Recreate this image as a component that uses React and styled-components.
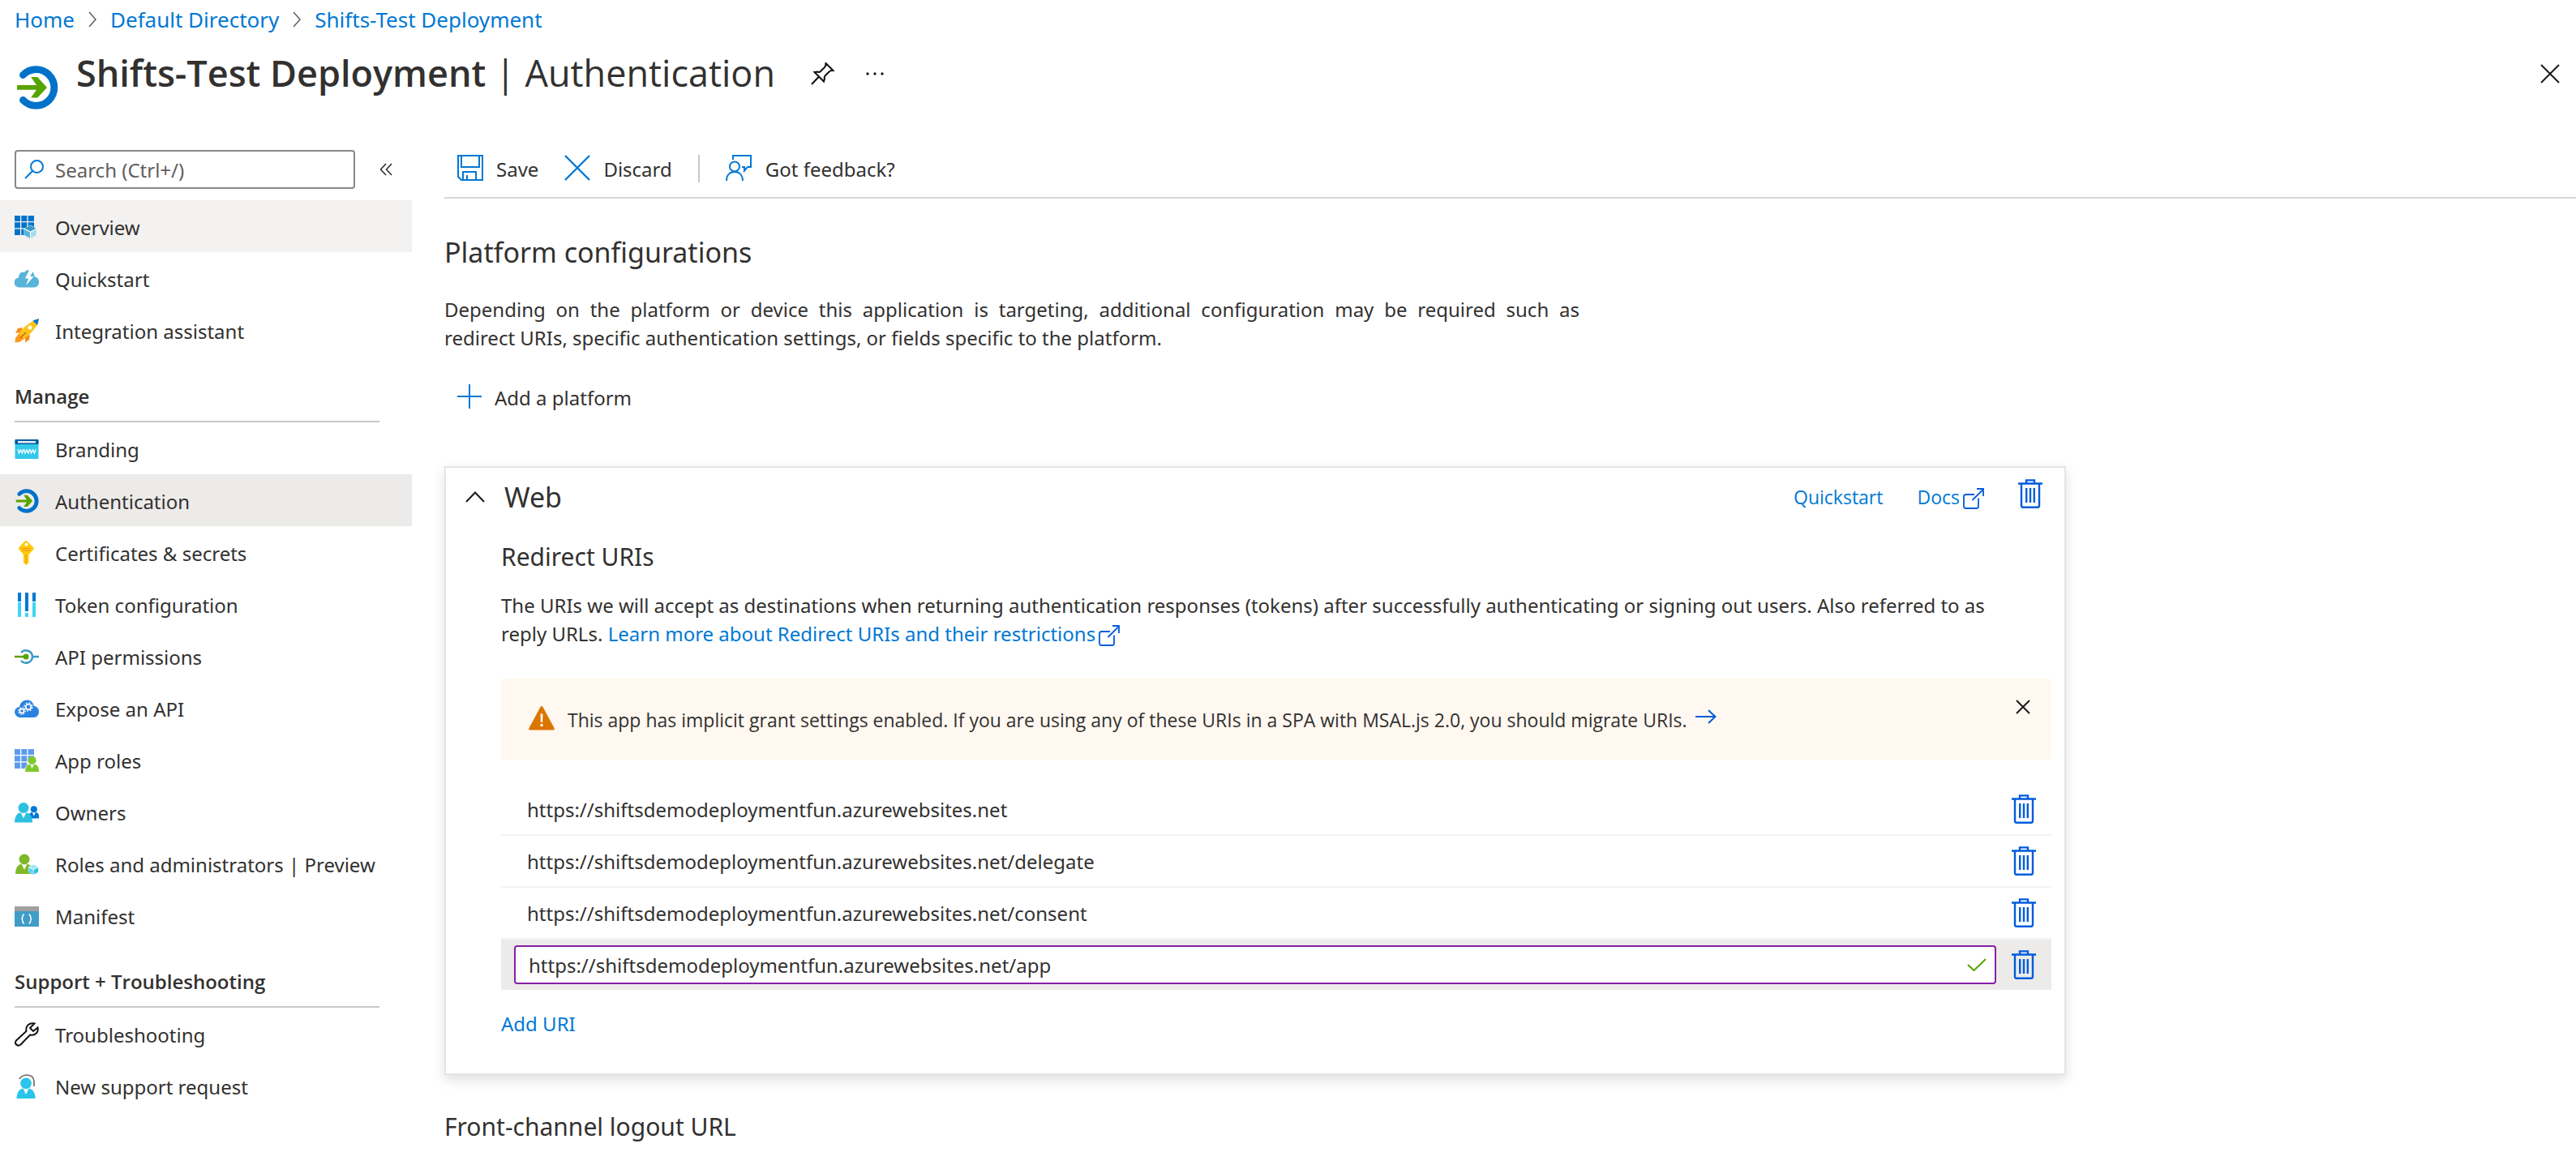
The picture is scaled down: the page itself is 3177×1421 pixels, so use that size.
import React from "react";
import styled, { createGlobalStyle, css } from "styled-components";

const Global = createGlobalStyle`
  *, *::before, *::after { box-sizing: border-box; }
  body {
    margin: 0;
    background: #ffffff;
    color: #323130;
    font-family: "Noto Sans", "Open Sans", sans-serif;
    font-size: 24px;
    line-height: 35px;
  }
  button, input { font: inherit; color: inherit; }
  h1, h2, h3, p, ul, ol { margin: 0; padding: 0; font-weight: 400; }
  ul, ol { list-style: none; }
  svg { display: block; flex: none; }
`;

const displayFont = css`
  font-family: "Open Sans", "Noto Sans", sans-serif;
`;

const smallText = css`
  ${displayFont}
  font-size: 23px;
`;

const Page = styled.div`
  display: flex;
  flex-direction: column;
`;

const Link = styled.a`
  color: #0078d4;
  text-decoration: none;
  ${(p) => p.$small && smallText}
  svg { display: inline-block; vertical-align: -6px; margin-left: 4px; }
`;

const NoBreak = styled.span`
  white-space: nowrap;
`;

const Crumbs = styled.ol`
  display: flex;
  align-items: center;
  height: 48px;
  padding: 0 18px;
  font-size: 26px;
  li { display: flex; align-items: center; }
  li svg { margin: 0 17px; }
`;

const TitleBar = styled.header`
  display: flex;
  align-items: center;
  height: 120px;
  padding: 0 20px 0 18px;
`;

const Title = styled.h1`
  ${displayFont}
  margin: 0 44px 36px 22px;
  font-size: 45px;
  line-height: 60px;
  strong { font-weight: 600; }
`;

const IconButton = styled.button`
  display: flex;
  align-items: center;
  justify-content: center;
  padding: 0;
  border: 0;
  background: none;
`;

const TitleActions = styled.div`
  display: flex;
  flex: 1;
  align-items: center;
  gap: 38px;
  margin-bottom: 34px;
  & > :last-child { margin-left: auto; }
`;

const Body = styled.div`
  display: flex;
  align-items: flex-start;
`;

const Sidebar = styled.nav`
  flex: none;
  width: 508px;
`;

const SearchRow = styled.div`
  display: flex;
  align-items: center;
  gap: 30px;
  padding: 17px 24px 14px 18px;
`;

const SearchBox = styled.label`
  display: flex;
  align-items: center;
  gap: 14px;
  width: 420px;
  height: 48px;
  padding: 0 10px;
  border: 2px solid #8a8886;
  border-radius: 4px;
  input {
    flex: 1;
    min-width: 0;
    padding: 0;
    border: 0;
    outline: 0;
    background: none;
  }
  input::placeholder { color: #605e5c; opacity: 1; }
`;

const NavLink = styled.a`
  display: flex;
  align-items: center;
  gap: 20px;
  height: 64px;
  padding: 2px 0 0 18px;
  color: inherit;
  text-decoration: none;
  background: ${(p) => p.$bg || "transparent"};
`;

const NavHeading = styled.h2`
  ${displayFont}
  height: 82px;
  margin: 0 40px 0 18px;
  padding-top: 32px;
  border-bottom: 2px solid #c8c8c8;
  font-size: 24px;
  font-weight: 600;
`;

const Main = styled.main`
  flex: 1;
  min-width: 0;
  margin-left: 40px;
`;

const Toolbar = styled.div`
  display: flex;
  align-items: center;
  gap: 32px;
  height: 77px;
  padding: 5px 0 0 16px;
  border-bottom: 2px solid #d6d6d6;
`;

const Command = styled.button`
  display: flex;
  align-items: center;
  gap: 16px;
  height: 48px;
  padding: 0;
  border: 0;
  background: none;
  svg { margin-bottom: 2px; }
`;

const Divider = styled.span`
  width: 2px;
  height: 34px;
  background: #c8c8c8;
`;

const Heading = styled.h2`
  font-size: ${(p) => (p.$large ? "34px" : "30px")};
  line-height: 48px;
`;

const Content = styled.div`
  display: flex;
  flex-direction: column;
  align-items: flex-start;
  padding-top: 42px;
`;

const Intro = styled.p`
  max-width: 1400px;
  margin: 29px 0 32px;
  text-align: justify;
`;

const AddPlatform = styled(Command)`
  margin-left: 16px;
`;

const Card = styled.section`
  width: 100%;
  max-width: 2000px;
  margin: 61px 0 40px;
  padding: 0 16px 44px 68px;
  border: 2px solid #e5e5e5;
  box-shadow: 0 6px 14px rgba(0, 0, 0, 0.13);
`;

const CardHeader = styled.div`
  display: flex;
  align-items: center;
  height: 72px;
  margin-left: -44px;
  padding-right: 11px;
  h2 { flex: 1; margin-left: 24px; }
`;

const CardLinks = styled.div`
  display: flex;
  align-items: center;
  gap: 42px;
  button { margin-bottom: 8px; }
`;

const SubHeading = styled(Heading)`
  margin-top: 14px;
`;

const Description = styled.p`
  margin: 18px 0 38px;
`;

const Banner = styled.div`
  display: flex;
  align-items: flex-start;
  height: 100px;
  padding: 34px 26px 0 34px;
  border-radius: 4px;
  background: #fff8f0;
  ${smallText}
  p { flex: 1; margin-left: 16px; }
  a svg { display: inline-block; vertical-align: 4px; margin-left: 10px; }
  button { margin-top: -8px; }
`;

const UriList = styled.ul`
  margin-top: 30px;
`;

const UriRow = styled.li`
  display: flex;
  align-items: center;
  justify-content: space-between;
  height: 64px;
  padding: 0 19px 0 32px;
  border-bottom: 2px solid #f3f2f1;
  ${(p) =>
    p.$active &&
    css`
      height: 62px;
      padding-left: 16px;
      gap: 19px;
      border-bottom: 0;
      background: #edebe9;
    `}
`;

const UriField = styled.label`
  display: flex;
  flex: 1;
  align-items: center;
  height: 48px;
  padding: 0 10px 0 16px;
  border: 2px solid #881fa8;
  border-radius: 4px;
  background: #ffffff;
  input {
    flex: 1;
    min-width: 0;
    padding: 0;
    border: 0;
    outline: 0;
    background: none;
  }
`;

const AddUri = styled.button`
  display: block;
  margin-top: 24px;
  padding: 0;
  border: 0;
  background: none;
  color: #0078d4;
`;

/* Icons */

const Line = ({ w, h = w, color = "#0078d4", sw = 2, children }) => (
  <svg width={w} height={h} viewBox={`0 0 ${w} ${h}`} fill="none" stroke={color} strokeWidth={sw} aria-hidden="true">
    {children}
  </svg>
);
const Fill = ({ size = 30, children }) => (
  <svg width={size} height={size} viewBox="0 0 30 30" aria-hidden="true">{children}</svg>
);

const AuthIcon = ({ size }) => (
  <Fill size={size}>
    <path d="M5.800 6.400A12.400 12.400 0 1 1 5.800 23.600" fill="none" stroke="#0072c9" strokeWidth="4.900" strokeLinecap="round" />
    <path d="M1.700 13.400H15L11.200 7.800h4.500L22.200 15l-6.500 6.900h-4.500L15 16.500H1.700z" fill="#57a300" />
  </Fill>
);
const TrashIcon = () => (
  <Line w={30} h={36} color="#015cda" sw={2.4}>
    <path d="M0 5.500h30M10 5V1.400h10V5M4 6v26.500q0 2.200 2 2.200h18q2 0 2-2.200V6M10.200 11v18M15 11v18M19.800 11v18" />
  </Line>
);
const ExternalIcon = () => (
  <Line w={26} color="#015cda" sw={1.8}>
    <path d="M14 8H3.500Q1 8 1 10.500v12Q1 25 3.500 25h13q2.500 0 2.500-2.500V12.500M11.500 15 25 1.500M17 1h8v9" />
  </Line>
);
const Cross = ({ s, color = "#1b1a19", sw = 2 }) => (
  <Line w={s} color={color} sw={sw}><path d={`M1 1 ${s - 1} ${s - 1}M${s - 1} 1 1 ${s - 1}`} /></Line>
);
const CrumbChevron = () => <Line w={10} h={20} color="#605e5c" sw={1.5}><path d="m1 1 8 9-8 9" /></Line>;
const PinIcon = () => (
  <Line w={29} h={28} color="#111">
    <path d="m18.500 1 9 9q-3.500-.5-5 1.500l-4.500 4.500q-2 2-1 4l-1 3.500L4.500 12l3.500-.5q2.500 1 4-.5l4.500-4.500q2-1.500 2-5.500zM10 17.500 1 27" />
  </Line>
);
const SaveIcon = () => (
  <Line w={32}>
    <path d="M1 1h30v30H5l-4-4zM5 1v14h22V1M7 31V21h16v10M12 31v-6" />
  </Line>
);
const FeedbackIcon = () => (
  <Line w={33} h={32}>
    <circle cx="11" cy="14.500" r="6" />
    <path d="M1 32c0-7 4-11 10-11s10 4 10 11M9 6V1h22v14h-4l-4 4.500V15h-3" />
  </Line>
);
const PlusIcon = () => <Line w={30}><path d="M15 0v30M0 15h30" /></Line>;
const SearchIcon = () => <Line w={24}><circle cx="15.500" cy="8.500" r="7.500" /><path d="M10 14 1 23" /></Line>;
const CollapseIcon = () => <Line w={16} color="#323130" sw={1.6}><path d="M8 1 1.500 8 8 15M15 1 8.500 8 15 15" /></Line>;
const ChevronUp = () => <Line w={24} h={14} color="#1b1a19"><path d="m1 13 11-11.500L23 13" /></Line>;
const CheckIcon = () => <Line w={24} h={16} color="#57a300"><path d="m1 8 7.500 7L23 1" /></Line>;
const ArrowIcon = () => <Line w={26} h={18} color="#015cda"><path d="M0 9h24M16 1l8.500 8L16 17" /></Line>;
const DotsIcon = () => (
  <svg width="24" height="6" viewBox="0 0 24 6" fill="#1b1a19" aria-hidden="true">
    <circle cx="3" cy="3" r="1.700" /><circle cx="12" cy="3" r="1.700" /><circle cx="21" cy="3" r="1.700" />
  </svg>
);
const WarnIcon = () => (
  <svg width="32" height="30" viewBox="0 0 32 30" aria-hidden="true">
    <path d="M14.500 1q1.500-2 3 0l14 26q1 2.500-1.500 2.500H2q-2.500 0-1.500-2.500z" fill="#db7500" />
    <path d="M14.500 9.500h3l-.4 10.500h-2.200zM14.500 22h3v3h-3z" fill="#fff" />
  </svg>
);

const Person = ({ color, x = 0, y = 0, s = 1 }) => (
  <g transform={`translate(${x} ${y}) scale(${s})`}>
    <path d="M0 25c0-7 3-11.500 7-12h8c4 .500 7 5 7 12z" fill={color} />
    <path d="m7.500 12.500 3.500 7.500 3.500-7.500z" fill="#fff" />
    <circle cx="11" cy="7" r="6.500" fill={color} />
  </g>
);
const Grid = ({ color, children }) => (
  <Fill>
    <path d="M0 1h7v7H0zM8.300 1h7v7h-7zM16.600 1h7.400v7h-7.400zM0 9.300h7v7H0zM8.300 9.300h7v7h-7zM16.600 9.300h7.400v7h-7.400zM0 17.600h7V25H0zM8.300 17.600h7V25h-7z" fill={color} />
    {children}
  </Fill>
);
const Cube = ({ x, y, s = 1, top = "#3999c6", left = "#59b4d9", right = "#a9dbf0" }) => (
  <g transform={`translate(${x} ${y}) scale(${s})`}>
    <path d="M8 0 0 4.500v8L8 17l8-4.500v-8z" fill="#fff" />
    <path d="m8 .5 7 3.800-7 3.700-7-3.700z" fill={top} />
    <path d="M.5 5.200 7.500 9v7.500l-7-4z" fill={left} />
    <path d="M15.500 5.200 8.500 9v7.500l7-4z" fill={right} />
  </g>
);

const icons = {
  overview: <Grid color="#0072c9"><Cube x={11.5} y={12.5} /></Grid>,
  quickstart: (
    <Fill>
      <path d="M6 25.500a6 6 0 0 1-1-12C5 8 9 5 12 7c3-5 12-4 12.500 5 7.500 1 7.500 13 0 13.500z" fill="#59b4d9" />
      <path d="m18 4-5 10.500h4L14 23l9.500-11h-4.500L24 4z" fill="#fff" />
    </Fill>
  ),
  rocket: (
    <Fill>
      <path d="M10 11 4 12l-3 6 7-1zM19 20l-1 6-5 3.500 0-8z" fill="#f78d1e" />
      <path d="M6 17 1 24l-.5 5.500L6 29l7-5z" fill="#ff9b1f" />
      <path d="M24 2 30 .5 28.500 7 21 17l-9 8-7-6.500 8-9z" fill="#fcc419" />
      <path d="M22.500 2.500 30 0l-2 8z" fill="#0072c9" />
      <circle cx="19" cy="11" r="2.500" fill="#fff" />
      <path d="m7 24 7-7" stroke="#d0600a" strokeWidth="1.500" />
    </Fill>
  ),
  branding: (
    <Fill>
      <rect x=".5" y="3" width="29" height="24" rx="1" fill="#32c8ea" />
      <path d="M.5 9V4q0-1 1-1h27q1 0 1 1v5z" fill="#005ba1" />
      <rect x="4" y="5" width="22" height="2.500" fill="#e6eef5" />
      <path d="m4 15 1.500 5 2-4 2 4 1.500-5M11.500 15l1.500 5 2-4 2 4 1.500-5M19 15l1.500 5 2-4 2 4 1.500-5" fill="none" stroke="#fff" strokeWidth="1.300" />
    </Fill>
  ),
  auth: <AuthIcon size={30} />,
  key: (
    <Fill>
      <path d="M14 0q1 0 2 1l7 7q1.500 1.500 0 3l-5.500 6v10L14.500 30 11 27V17L5.500 11Q4 9.500 5.500 8l6.500-7q1-1 2-1z" fill="#ffca0a" />
      <path d="M9 9.500h10M9 12h10M14 17v11" stroke="#f78d1e" strokeWidth="1" />
      <circle cx="14.500" cy="4.500" r="2" fill="#fff" />
    </Fill>
  ),
  token: (
    <Fill>
      <path d="M4 0h4v11H4zM13 0h4v23h-4zM22 0h4v11h-4z" fill="#0078d4" />
      <path d="M4 12h4v18H4zM13 25h4v5h-4zM22 12h4v18h-4z" fill="#40d5f5" />
    </Fill>
  ),
  permissions: (
    <Fill>
      <path d="M8 10a8 8 0 0 1 14 5h8M22 15A8 8 0 0 1 8 20" fill="none" stroke="#3999c6" strokeWidth="2.500" />
      <path d="M0 15h14" stroke="#57a300" strokeWidth="2.500" />
      <circle cx="14" cy="15" r="3.500" fill="#57a300" />
    </Fill>
  ),
  expose: (
    <Fill>
      <path d="M7 26C-2 25-2 14 6 13 8 2 22 2 24 12c8 1 8 13 0 14z" fill="#2b82e0" />
      <circle cx="9" cy="18" r="2.600" fill="none" stroke="#fff" strokeWidth="1.600" />
      <circle cx="9" cy="18" r="4.200" fill="none" stroke="#fff" strokeWidth="1.200" strokeDasharray="1.600 1.700" />
      <circle cx="17" cy="13" r="3.200" fill="none" stroke="#fff" strokeWidth="1.600" />
      <circle cx="17" cy="13" r="5" fill="none" stroke="#fff" strokeWidth="1.400" strokeDasharray="2 1.900" />
    </Fill>
  ),
  appRoles: <Grid color="#5e9bee"><path d="M12 30q0-8 5-10 0-10 9-9l4 10v9z" fill="#fff" /><Person color="#7fc92c" x={13} y={9.5} s={0.78} /></Grid>,
  owners: <Fill><Person color="#0078d4" x={17} y={7} s={0.62} /><Person color="#2bbfe0" y={2.5} /></Fill>,
  roles: <Fill><Person color="#7fb828" x={1} y={2} /><Cube x={17} y={15} s={0.78} top="#9be8fb" left="#50d5f5" right="#32bedd" /></Fill>,
  manifest: (
    <Fill>
      <path d="M0 3h30v25H0z" fill="#3f9dc8" /><path d="M0 3h30v6H0z" fill="#a0a1a2" />
      <path d="M12 13c-3 0-1.500 4-3 5.500 1.500 1.500 0 5.500 3 5.500M17.500 13c3 0 1.500 4 3 5.500-1.500 1.500 0 5.500-3 5.500" fill="none" stroke="#fff" strokeWidth="1.500" />
    </Fill>
  ),
  wrench: (
    <Line w={30} color="#111">
      <path d="M24.500 1.500C19 0 13 4 14.500 11L2 22.500c-3 4 2 8 5.500 5L19 15.500c6 1.500 11-3 9.500-9L23 11l-4-4z" />
    </Line>
  ),
  support: (
    <Fill>
      <path d="M6 6c3-6 17-8 18 3v6" fill="none" stroke="#767676" strokeWidth="1.800" />
      <Person color="#2bc4ea" x={2.5} y={4} s={1.05} />
    </Fill>
  ),
};

const NavItems = ({ items }) => (
  <ul>
    {items.map(([icon, label, bg]) => (
      <li key={label}><NavLink href="#" $bg={bg}>{icons[icon]}{label}</NavLink></li>
    ))}
  </ul>
);

const overviewItems = [
  ["overview", "Overview", "#f3f2f1"],
  ["quickstart", "Quickstart"],
  ["rocket", "Integration assistant"],
];
const manageItems = [
  ["branding", "Branding"],
  ["auth", "Authentication", "#edebe9"],
  ["key", "Certificates & secrets"],
  ["token", "Token configuration"],
  ["permissions", "API permissions"],
  ["expose", "Expose an API"],
  ["appRoles", "App roles"],
  ["owners", "Owners"],
  ["roles", "Roles and administrators | Preview"],
  ["manifest", "Manifest"],
];
const supportItems = [
  ["wrench", "Troubleshooting"],
  ["support", "New support request"],
];

const host = "https://shiftsdemodeploymentfun.azurewebsites.net";
const uris = [host, `${host}/delegate`, `${host}/consent`];

const DeleteButton = ({ label }) => (
  <IconButton type="button" aria-label={label}><TrashIcon /></IconButton>
);

export default function App() {
  return (
    <Page>
      <Global />
      <Crumbs aria-label="Breadcrumb">
        <li><Link href="#">Home</Link><CrumbChevron /></li>
        <li><Link href="#">Default Directory</Link><CrumbChevron /></li>
        <li><Link href="#">Shifts-Test Deployment</Link></li>
      </Crumbs>
      <TitleBar>
        <AuthIcon size={54} />
        <Title><strong>Shifts-Test Deployment</strong> | Authentication</Title>
        <TitleActions>
          <IconButton type="button" aria-label="Pin"><PinIcon /></IconButton>
          <IconButton type="button" aria-label="More"><DotsIcon /></IconButton>
          <IconButton type="button" aria-label="Close"><Cross s={24} /></IconButton>
        </TitleActions>
      </TitleBar>
      <Body>
        <Sidebar>
          <SearchRow>
            <SearchBox><SearchIcon /><input type="search" aria-label="Search" placeholder="Search (Ctrl+/)" /></SearchBox>
            <IconButton type="button" aria-label="Collapse menu"><CollapseIcon /></IconButton>
          </SearchRow>
          <NavItems items={overviewItems} />
          <NavHeading>Manage</NavHeading>
          <NavItems items={manageItems} />
          <NavHeading>Support + Troubleshooting</NavHeading>
          <NavItems items={supportItems} />
        </Sidebar>
        <Main>
          <Toolbar>
            <Command type="button"><SaveIcon />Save</Command>
            <Command type="button"><Cross s={32} color="#0078d4" sw={2.4} />Discard</Command>
            <Divider />
            <Command type="button"><FeedbackIcon />Got feedback?</Command>
          </Toolbar>
          <Content>
            <Heading $large>Platform configurations</Heading>
            <Intro>
              Depending on the platform or device this application is targeting, additional configuration may be
              required such as <NoBreak>redirect URIs,</NoBreak> specific authentication settings, or fields specific
              to the platform.
            </Intro>
            <AddPlatform type="button"><PlusIcon />Add a platform</AddPlatform>
            <Card>
              <CardHeader>
                <IconButton type="button" aria-label="Collapse Web"><ChevronUp /></IconButton>
                <Heading $large>Web</Heading>
                <CardLinks>
                  <Link href="#" $small>Quickstart</Link>
                  <Link href="#" $small>Docs<ExternalIcon /></Link>
                  <DeleteButton label="Delete Web platform" />
                </CardLinks>
              </CardHeader>
              <SubHeading as="h3">Redirect URIs</SubHeading>
              <Description>
                The URIs we will accept as destinations when returning authentication responses (tokens) after
                successfully authenticating or signing out users. Also referred to as <NoBreak>reply URLs.</NoBreak>{" "}
                <Link href="#">Learn more about Redirect URIs and their restrictions<ExternalIcon /></Link>
              </Description>
              <Banner role="status">
                <WarnIcon />
                <p>
                  This app has implicit grant settings enabled. If you are using any of these URIs in a SPA with
                  MSAL.js 2.0, you should migrate URIs.
                  <a href="#" aria-label="Migrate URIs"><ArrowIcon /></a>
                </p>
                <IconButton type="button" aria-label="Dismiss"><Cross s={18} /></IconButton>
              </Banner>
              <UriList>
                {uris.map((uri) => (
                  <UriRow key={uri}>{uri}<DeleteButton label={`Delete ${uri}`} /></UriRow>
                ))}
                <UriRow $active>
                  <UriField><input type="text" aria-label="Redirect URI" defaultValue={`${host}/app`} /><CheckIcon /></UriField>
                  <DeleteButton label="Delete redirect URI" />
                </UriRow>
              </UriList>
              <AddUri type="button">Add URI</AddUri>
            </Card>
            <Heading>Front-channel logout URL</Heading>
          </Content>
        </Main>
      </Body>
    </Page>
  );
}
